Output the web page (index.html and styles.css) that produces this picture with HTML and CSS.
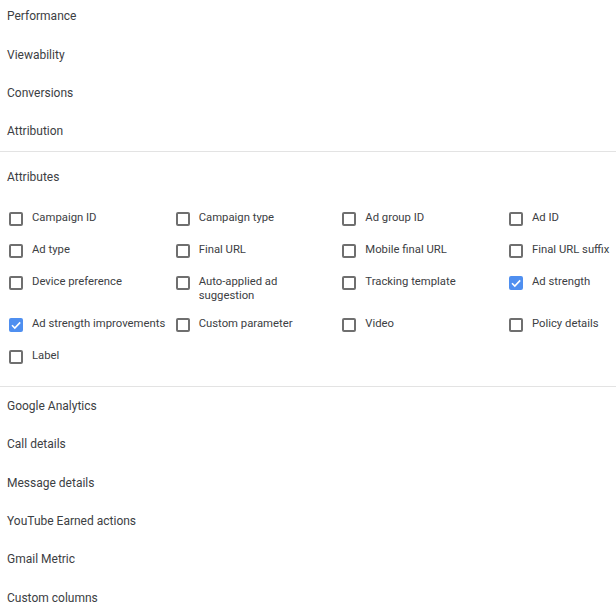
FILE: index.html
```html
<!DOCTYPE html>
<html>
<head>
<meta charset="utf-8">
<link rel="stylesheet" href="styles.css">
</head>
<body>
<div class="panel">
  <div class="group group-top">
    <div class="section">Performance</div>
    <div class="section">Viewability</div>
    <div class="section">Conversions</div>
    <div class="section">Attribution</div>
  </div>
  <div class="attributes">
    <div class="attr-title">Attributes</div>
    <div class="grid">
      <label class="item"><span class="box"></span><span class="text">Campaign ID</span></label>
      <label class="item"><span class="box"></span><span class="text">Campaign type</span></label>
      <label class="item"><span class="box"></span><span class="text">Ad group ID</span></label>
      <label class="item"><span class="box"></span><span class="text">Ad ID</span></label>
      <label class="item"><span class="box"></span><span class="text">Ad type</span></label>
      <label class="item"><span class="box"></span><span class="text">Final URL</span></label>
      <label class="item"><span class="box"></span><span class="text">Mobile final URL</span></label>
      <label class="item"><span class="box"></span><span class="text">Final URL suffix</span></label>
      <label class="item"><span class="box"></span><span class="text">Device preference</span></label>
      <label class="item"><span class="box"></span><span class="text">Auto-applied ad<br>suggestion</span></label>
      <label class="item"><span class="box"></span><span class="text">Tracking template</span></label>
      <label class="item"><span class="box checked"><svg viewBox="0 0 14 14" width="14" height="14"><path d="M3 7.2 L5.8 10 L11.2 4.4" fill="none" stroke="#fff" stroke-width="1.6"/></svg></span><span class="text">Ad strength</span></label>
      <label class="item"><span class="box checked"><svg viewBox="0 0 14 14" width="14" height="14"><path d="M3 7.2 L5.8 10 L11.2 4.4" fill="none" stroke="#fff" stroke-width="1.6"/></svg></span><span class="text">Ad strength improvements</span></label>
      <label class="item"><span class="box"></span><span class="text">Custom parameter</span></label>
      <label class="item"><span class="box"></span><span class="text">Video</span></label>
      <label class="item"><span class="box"></span><span class="text">Policy details</span></label>
      <label class="item"><span class="box"></span><span class="text">Label</span></label>
    </div>
  </div>
  <div class="group">
    <div class="section">Google Analytics</div>
    <div class="section">Call details</div>
    <div class="section">Message details</div>
    <div class="section">YouTube Earned actions</div>
    <div class="section">Gmail Metric</div>
    <div class="section">Custom columns</div>
  </div>
</div>
</body>
</html>
```

FILE: styles.css
```css
html, body {
  margin: 0;
  padding: 0;
  background: #ffffff;
  overflow: hidden;
}
body {
  font-family: Roboto, "Liberation Sans", Arial, sans-serif;
  color: #3c4043;
}
.panel {
  width: 616px;
  overflow: hidden;
}
.group-top {
  margin-top: -3px;
}
.section {
  height: 38.4px;
  display: flex;
  align-items: center;
  padding-left: 7px;
  font-size: 12px;
}
.attributes {
  border-top: 1px solid #e3e3e3;
  border-bottom: 1px solid #e3e3e3;
  padding-bottom: 14px;
}
.attr-title {
  height: 50px;
  display: flex;
  align-items: center;
  padding-left: 7px;
  font-size: 12px;
}
.grid {
  display: grid;
  grid-template-columns: repeat(4, 166.67px);
  padding-left: 9px;
}
.item {
  display: flex;
  align-items: flex-start;
  gap: 9px;
  min-height: 32px;
  box-sizing: border-box;
  padding: 9px 0 5px;
  font-size: 11.3px;
  line-height: 14px;
  white-space: nowrap;
}
.box {
  flex: none;
  width: 14px;
  height: 14px;
  margin-top: 1px;
  box-sizing: border-box;
  border: 2px solid #6f6f6f;
  border-radius: 2px;
  position: relative;
}
.box.checked {
  background: #4f8ff0;
  border-color: #4f8ff0;
}
.box.checked svg {
  position: absolute;
  left: -2px;
  top: -2px;
}
```
